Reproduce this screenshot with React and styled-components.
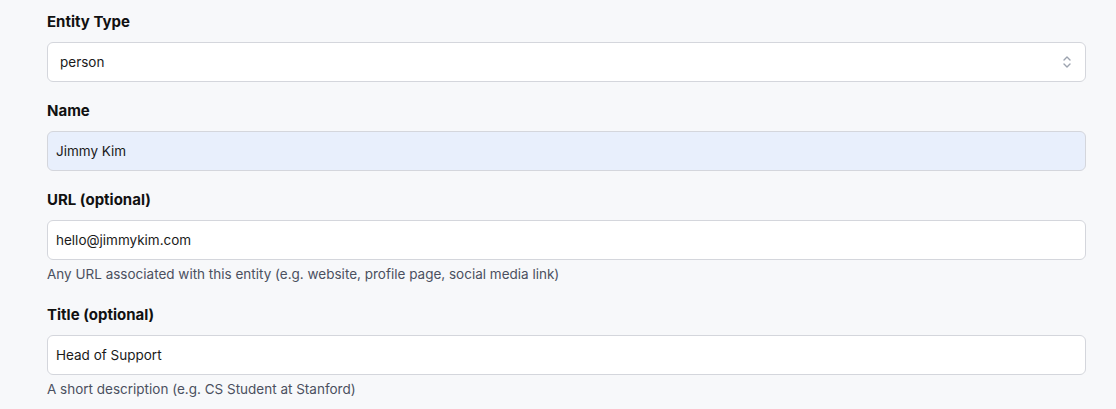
import React from "react";
import styled, { createGlobalStyle } from "styled-components";

const GlobalStyle = createGlobalStyle`
  body {
    margin: 0;
    background: #f7f8fa;
    font-family: Inter, "Noto Sans", sans-serif;
    color: #111827;
  }
`;

const Form = styled.div`
  padding: 11px 30px 0 47px;
  display: flex;
  flex-direction: column;
  gap: 18px;
`;

const Field = styled.div`
  display: flex;
  flex-direction: column;
`;

const Label = styled.label`
  font-size: 15px;
  font-weight: 650;
  line-height: 21px;
  margin-bottom: 10px;
  color: #111111;
`;

const Box = styled.div`
  position: relative;
  height: 40px;
  box-sizing: border-box;
  border: 1px solid #d4d6dc;
  border-radius: 6px;
  background: ${(p) => (p.filled ? "#e8effc" : "#ffffff")};
  display: flex;
  align-items: center;
  padding: 0 ${(p) => (p.select ? "12px" : "8px")};
  font-size: 13.5px;
  color: #1a1a1a;
`;

const Chevron = styled.svg`
  position: absolute;
  right: 12px;
  top: 50%;
  transform: translateY(-50%);
`;

const Help = styled.div`
  margin: 5px 0 3px;
  font-size: 13.5px;
  line-height: 18px;
  color: #4b5060;
`;

const fields = [
  { label: "Name", value: "Jimmy Kim", filled: true },
  {
    label: "URL (optional)",
    value: "hello@jimmykim.com",
    help: "Any URL associated with this entity (e.g. website, profile page, social media link)",
  },
  {
    label: "Title (optional)",
    value: "Head of Support",
    help: "A short description (e.g. CS Student at Stanford)",
  },
];

export default function App() {
  return (
    <>
      <GlobalStyle />
      <Form>
        <Field>
          <Label>Entity Type</Label>
          <Box select>
            person
            <Chevron width="12" height="16" viewBox="0 0 12 16" fill="none">
              <path d="M3 6l3-3 3 3M3 10l3 3 3-3" stroke="#9ca3af" strokeWidth="1.4" strokeLinecap="round" strokeLinejoin="round" />
            </Chevron>
          </Box>
        </Field>
        {fields.map((f) => (
          <Field key={f.label}>
            <Label>{f.label}</Label>
            <Box filled={f.filled}>{f.value}</Box>
            {f.help && <Help>{f.help}</Help>}
          </Field>
        ))}
      </Form>
    </>
  );
}
